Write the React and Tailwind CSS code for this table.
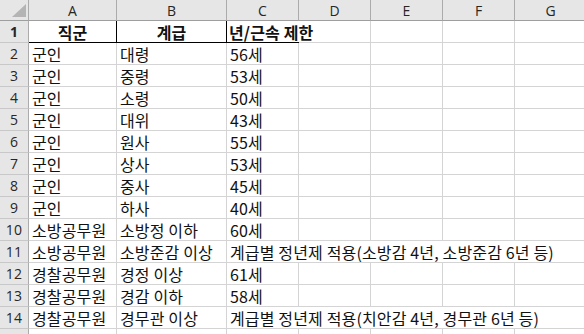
const columns = [
  { key: 'A', width: 'w-[88px]' },
  { key: 'B', width: 'w-[110px]' },
  { key: 'C', width: 'w-[72px]' },
  { key: 'D', width: 'w-[72px]' },
  { key: 'E', width: 'w-[72px]' },
  { key: 'F', width: 'w-[72px]' },
  { key: 'G', width: 'w-[72px]' },
];

// rank / retirement age table
const rows = [
  ['군인', '대령', '56세'],
  ['군인', '중령', '53세'],
  ['군인', '소령', '50세'],
  ['군인', '대위', '43세'],
  ['군인', '원사', '55세'],
  ['군인', '상사', '53세'],
  ['군인', '중사', '45세'],
  ['군인', '하사', '40세'],
  ['소방공무원', '소방정 이하', '60세'],
  ['소방공무원', '소방준감 이상', '계급별 정년제 적용(소방감 4년, 소방준감 6년 등)'],
  ['경찰공무원', '경정 이상', '61세'],
  ['경찰공무원', '경감 이하', '58세'],
  ['경찰공무원', '경무관 이상', '계급별 정년제 적용(치안감 4년, 경무관 6년 등)'],
];

const font = "font-['Noto_Sans_CJK_KR',sans-serif]";

function RowHeader({ label }) {
  return (
    <div className="w-[29px] h-full shrink-0 flex items-center justify-center bg-[#e6e6e6] border-r border-b border-r-[#ababab] border-b-[#c8c8c8] text-[14px] text-[#262626] font-['Open_Sans',sans-serif]">
      {label}
    </div>
  );
}

function DataRow({ num, cells }) {
  const overflow = cells[2].length > 8;
  return (
    <div className="flex h-[22px] shrink-0">
      <RowHeader label={num} />
      {columns.map((col, i) => {
        // long text in C spills over D..F, so their gridlines disappear
        const hideRight = overflow && i >= 2 && i <= 5;
        return (
          <div
            key={col.key}
            className={`${col.width} h-full shrink-0 flex items-center px-[3px] whitespace-nowrap border-b border-[#d4d4d4] ${hideRight ? '' : 'border-r'}`}
          >
            {cells[i] || ''}
          </div>
        );
      })}
    </div>
  );
}

export default function App() {
  return (
    <div className={`w-[584px] h-[334px] overflow-hidden bg-white text-[16px] tracking-[0.15px] text-[#111] ${font}`}>
      {/* column letters */}
      <div className="flex h-[21px] shrink-0">
        <div className="w-[29px] h-full shrink-0 flex items-end justify-end pr-[2px] pb-[3px] bg-[#e6e6e6] border-r border-b border-r-[#ababab] border-b-[#9e9e9e]">
          <svg width="14" height="13" viewBox="0 0 14 13">
            <polygon points="14,0 14,13 0,13" fill="#b4b4b4" />
          </svg>
        </div>
        {columns.map((col) => (
          <div
            key={col.key}
            className={`${col.width} h-full shrink-0 flex items-center justify-center bg-[#e6e6e6] border-r border-b border-r-[#ababab] border-b-[#9e9e9e] text-[14px] tracking-normal text-[#262626] font-['Open_Sans',sans-serif]`}
          >
            {col.key}
          </div>
        ))}
      </div>

      {/* header row */}
      <div className="flex h-[22px] shrink-0 font-bold">
        <RowHeader label="1" />
        <div className="w-[88px] h-full shrink-0 flex items-center justify-center border-r border-b border-black">직군</div>
        <div className="w-[110px] h-full shrink-0 flex items-center justify-center border-r border-b border-black">계급</div>
        <div className="w-[72px] h-full shrink-0 flex items-center px-[2px] whitespace-nowrap border-b border-black">년/근속 제한</div>
        <div className="w-[72px] h-full shrink-0 border-r border-b border-[#d4d4d4]" />
        <div className="w-[72px] h-full shrink-0 border-r border-b border-[#d4d4d4]" />
        <div className="w-[72px] h-full shrink-0 border-r border-b border-[#d4d4d4]" />
        <div className="w-[72px] h-full shrink-0 border-r border-b border-[#d4d4d4]" />
      </div>

      {rows.map((cells, idx) => (
        <DataRow key={idx} num={idx + 2} cells={cells} />
      ))}

      <DataRow num="" cells={['', '', '']} />
    </div>
  );
}
